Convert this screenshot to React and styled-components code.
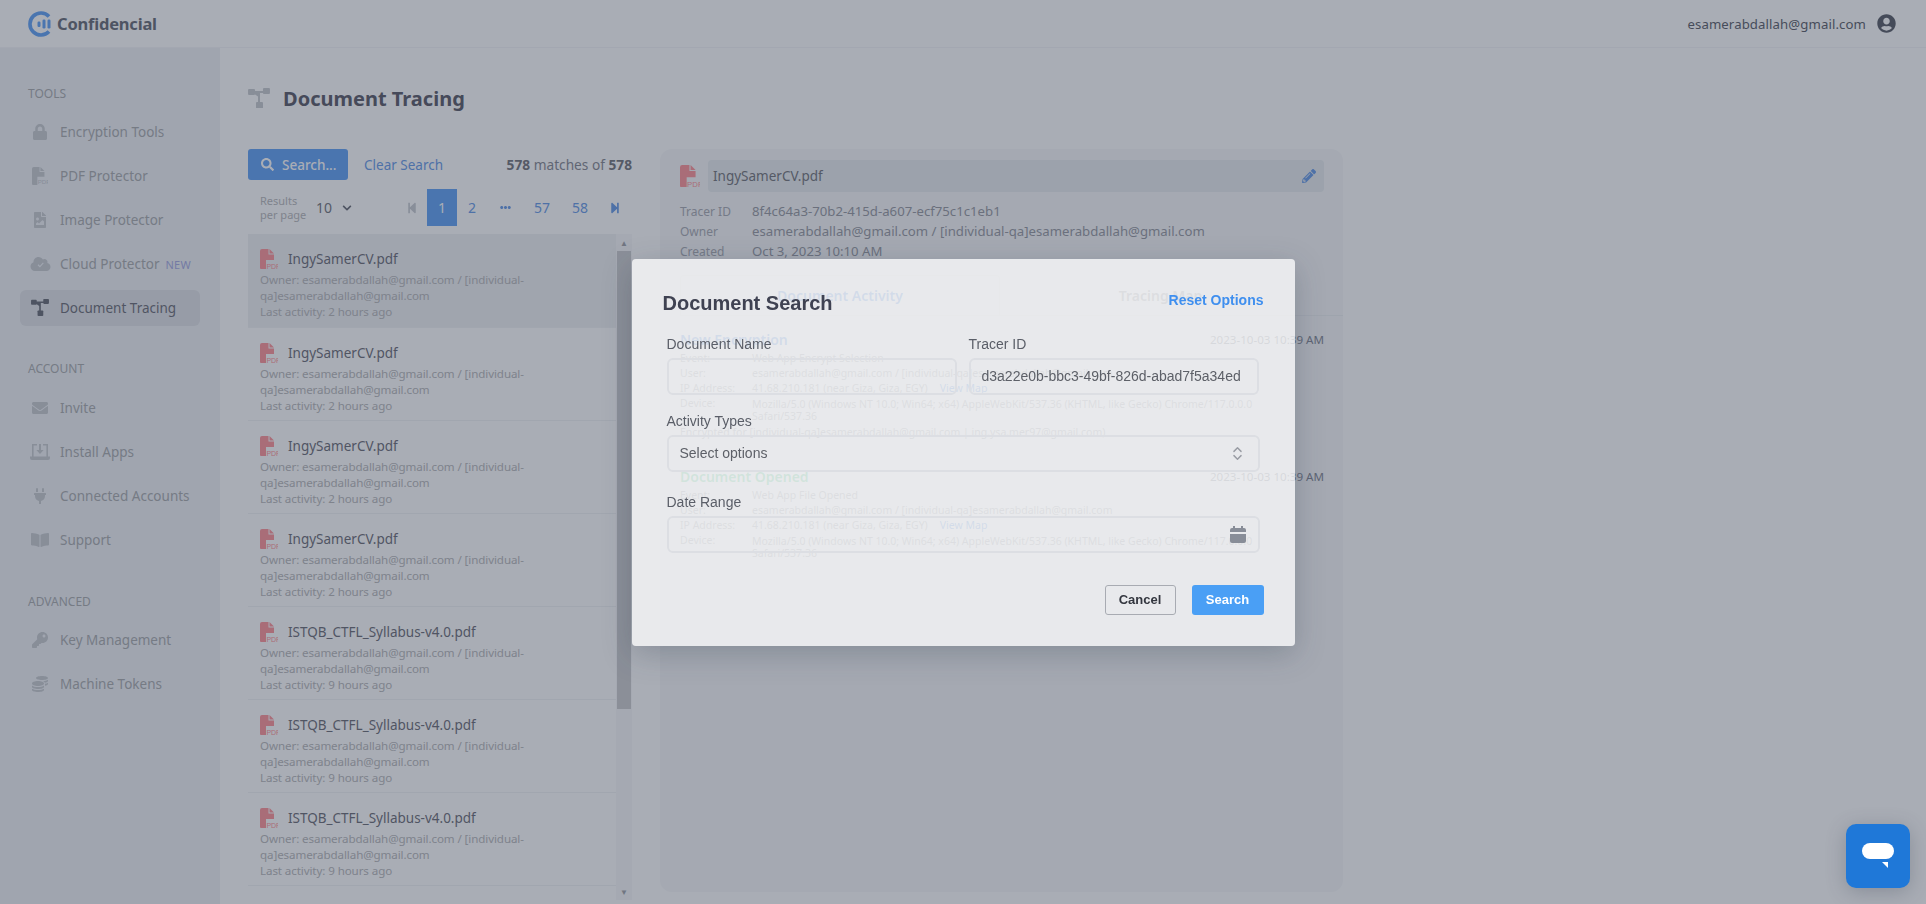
import React from "react";
import styled, { createGlobalStyle } from "styled-components";
import {
  FaLock, FaFileImage, FaEnvelope, FaPlug, FaBookOpen, FaKey, FaCoins,
  FaSearch, FaPencilAlt, FaStepBackward, FaStepForward, FaEllipsisH, FaChevronDown, FaUserCircle,
} from "react-icons/fa";
import { ChevronsUpDown } from "lucide-react";

const Global = createGlobalStyle`
  html, body { margin: 0; padding: 0; height: 100%; overflow: hidden; background: #fff; }
  body { font-family: "Noto Sans", "Open Sans", sans-serif; }
  * { box-sizing: border-box; }
`;

const Page = styled.div`display: flex; flex-direction: column; height: 904px; overflow: hidden;`;
const Header = styled.header`
  height: 48px; flex: none; display: flex; align-items: center; justify-content: space-between;
  padding: 0 30px 0 28px; background: #fff; border-bottom: 1px solid #f4f5f7;
`;
const Logo = styled.div`display: flex; align-items: center; gap: 4px;`;
const LogoText = styled.span`font-size: 16.5px; font-weight: 700; color: #5a5e6b; letter-spacing: -0.2px;`;
const UserBox = styled.div`display: flex; align-items: center; gap: 11px; font-size: 13.2px; color: #4c4f5a; letter-spacing: 0.1px;`;
const UserIcon = styled(FaUserCircle)`font-size: 19px; color: #4a4d58;`;
const Body = styled.div`flex: 1; display: flex; min-height: 0;`;
const Sidebar = styled.nav`width: 220px; flex: none; background: #eef1f5; padding: 38px 20px 0;`;
const SectionLabel = styled.div`
  font-size: 12px; line-height: 16px; color: #a2a4a7; padding-left: 8px;
  margin-top: ${(p) => p.$mt}px; margin-bottom: ${(p) => p.$mb || 12}px;
`;
const NavItem = styled.div`
  height: 36px; margin-bottom: 8px; display: flex; align-items: center; border-radius: 6px;
  font-size: 13.5px; color: ${(p) => (p.$active ? "#5e606b" : "#a2a4a7")};
  background: ${(p) => (p.$active ? "#dee0e5" : "transparent")};
`;
const NavIcon = styled.span`
  width: 40px; flex: none; display: flex; justify-content: center; font-size: 16px;
  color: ${(p) => (p.$active ? "#5a5d68" : "#c3c6cb")};
`;
const NewTag = styled.span`font-size: 11px; color: #9ea3e0; margin-left: 6px; letter-spacing: .2px;`;
const Main = styled.main`flex: 1; min-width: 0; padding: 33px 28px 0; display: flex; flex-direction: column;`;
const TitleRow = styled.div`display: flex; align-items: center; gap: 13px; height: 34px; margin-bottom: 34px;`;
const Title = styled.h1`margin: 0; font-size: 20px; font-weight: 700; color: #4c4b59;`;
const Columns = styled.div`flex: 1; display: flex; gap: 28px; min-height: 0;`;
const Left = styled.div`width: 384px; flex: none; display: flex; flex-direction: column;`;
const Toolbar = styled.div`display: flex; align-items: center; height: 31px; font-size: 13.5px;`;
const SearchBtn = styled.div`
  width: 100px; height: 31px; background: #5299f5; border-radius: 3px; color: #fff; display: flex; align-items: center;
  gap: 8px; padding-left: 13px; font-weight: 500; font-size: 13.5px; margin-right: 16px;
`;
const LinkText = styled.span`color: #5a92e6;`;
const Matches = styled.div`margin-left: auto; color: #7b7d88; font-size: 13.7px; b { color: #66686f; font-weight: 700; }`;
const PagerRow = styled.div`display: flex; align-items: center; height: 37px; margin-top: 9px; margin-bottom: 8px;`;
const PerPage = styled.div`width: 52px; margin-left: 12px; font-size: 11px; line-height: 14px; color: #b2b2b4;`;
const PerSelect = styled.div`
  width: 45px; height: 24px; display: flex; align-items: center; justify-content: space-between; padding: 0 5px 0 4px;
  font-size: 14px; color: #66686f; border-radius: 5px; box-shadow: 0 0 2px #ffffff80;
`;
const Pager = styled.div`margin-left: auto; margin-right: 1px; display: flex; align-items: center; font-size: 14px; color: #5a92e6;`;
const PageCell = styled.span`
  width: ${(p) => p.$w || 30}px; height: 37px; display: flex; align-items: center; justify-content: center;
  color: ${(p) => (p.$current ? "#fff" : p.$dim ? "#c4c7cd" : "#5a92e6")};
  background: ${(p) => (p.$current ? "#5299f5" : "transparent")};
`;
const ListWrap = styled.div`flex: none; display: flex; overflow: hidden; height: 666px;`;
const List = styled.div`flex: 1; min-width: 0; overflow: hidden;`;
const Item = styled.div`
  height: 93px; padding: 16px 12px 0; background: ${(p) => (p.$active ? "#eef0f3" : "transparent")};
  border-bottom: 1px solid #f1f2f4; &:first-child { height: 94px; }
`;
const ItemHead = styled.div`display: flex; align-items: center; gap: 10px; height: 18px; font-size: 13.5px; color: #5e606b; margin-bottom: 4px;`;
const ItemMeta = styled.div`font-size: 11.6px; letter-spacing: -0.1px; line-height: 16px; color: #b2b2b4; padding-right: 76px;`;
const ScrollTrack = styled.div`width: 16px; flex: none; background: #f7f8f9; display: flex; flex-direction: column; align-items: center;`;
const ScrollBtn = styled.div`height: 17px; flex: none; display: flex; align-items: center; justify-content: center; font-size: 8px; color: #9a9ca2;`;
const ScrollThumb = styled.div`width: 14px; height: 458px; flex: none; background: #c8c9cb;`;
const ScrollSpace = styled.div`flex: 1;`;
const Card = styled.section`
  width: 683px; flex: none; height: 743px; border-radius: 12px; background: #f7f8f9; padding: 11px 19px 0 20px; overflow: hidden;
`;
const FileRow = styled.div`display: flex; align-items: center; gap: 8px; height: 32px; margin-bottom: 9px;`;
const NameField = styled.div`
  flex: 1; height: 32px; background: #e7ebee; border-radius: 4px; display: flex; align-items: center; justify-content: space-between;
  padding: 0 8px 0 5px; font-size: 13.5px; color: #66686f;
`;
const Pencil = styled(FaPencilAlt)`font-size: 14px; color: #5a92e6;`;
const InfoRow = styled.div`display: flex; height: 20px; align-items: center; font-size: 13.2px; color: #8e909a;`;
const InfoLabel = styled.span`width: 72px; flex: none; font-size: 12px; color: #a0a2ab;`;
const Tabs = styled.div`display: flex; margin: 14px -19px 0 0; height: 41px; border-bottom: 1px solid #eceef1;`;
const Tab = styled.div`
  width: ${(p) => (p.$active ? "320px" : "auto")}; flex: ${(p) => (p.$active ? "none" : "1")};
  display: flex; align-items: center; justify-content: center; font-size: 14px; font-weight: 600;
  padding-right: ${(p) => (p.$active ? 0 : 22)}px;
  color: ${(p) => (p.$active ? "#5a92e6" : "#9ea1aa")};
  border: ${(p) => (p.$active ? "1px solid #eceef1" : "none")}; border-bottom: none; border-radius: 4px 4px 0 0;
`;
const Event = styled.div`margin-top: ${(p) => p.$mt}px;`;
const EventHead = styled.div`display: flex; justify-content: space-between; align-items: center; height: 20px; margin-bottom: 2px;`;
const EventName = styled.span`font-size: 14px; font-weight: 600; color: ${(p) => p.$color};`;
const EventDate = styled.span`font-size: 11.6px; color: #787b8a;`;
const EventRow = styled.div`display: flex; font-size: 10.5px; line-height: 15px; color: #a0a2ab;`;
const EventLabel = styled.span`width: 72px; flex: none;`;
const MapLink = styled.span`color: #5a92e6; margin-left: 12px;`;
const DeviceText = styled.span`max-width: 530px; line-height: 12px; padding-top: 2px; padding-bottom: 3px;`;

const Overlay = styled.div`
  position: fixed; inset: 0; background: rgba(64, 74, 92, .45); display: flex; align-items: center; justify-content: center;
  font-family: "Liberation Sans", Arial, sans-serif;
`;
const Modal = styled.div`
  width: 663px; height: 387px; background: rgba(255, 255, 255, .75); border-radius: 4px; padding: 32px 31px 0 31px;
  box-shadow: 0 8px 30px rgba(40, 50, 70, .25);
`;
const ModalHead = styled.div`display: flex; justify-content: space-between; align-items: flex-start; height: 24px;`;
const ModalTitle = styled.h2`margin: 0; font-size: 20px; line-height: 24px; font-weight: 700; color: #3f4252;`;
const ResetLink = styled.span`font-size: 14px; line-height: 18px; font-weight: 700; color: #3f8fef;`;
const Form = styled.div`padding: 21px 4px 0;`;
const FieldGrid = styled.div`display: grid; grid-template-columns: 290px 290px; column-gap: 12px;`;
const Field = styled.div`margin-top: ${(p) => p.$mt || 0}px;`;
const Label = styled.label`display: block; font-size: 14px; line-height: 16px; color: #5a5e68; margin-bottom: 6px;`;
const InputBox = styled.div`
  height: 37px; border: 2px solid #dcdee3; border-radius: 6px; display: flex; align-items: center; justify-content: space-between;
  padding: 0 12px 0 11px; font-size: 14px; color: #5d6068;
`;
const Actions = styled.div`display: flex; justify-content: flex-end; gap: 16px; margin-top: 32px; margin-right: -4px;`;
const Btn = styled.div`
  height: 30px; width: ${(p) => p.$w}px; border-radius: 3px; display: flex; align-items: center; justify-content: center;
  font-size: 13px; font-weight: 700;
  background: ${(p) => (p.$primary ? "#4a9ff5" : "transparent")};
  color: ${(p) => (p.$primary ? "#fff" : "#33363f")};
  border: ${(p) => (p.$primary ? "none" : "1.5px solid #a8abb2")};
`;
const Chat = styled.div`
  position: fixed; right: 16px; bottom: 16px; width: 64px; height: 64px; border-radius: 10px; background: #1f78d8;
  box-shadow: 0 4px 20px rgba(60, 70, 85, .3); display: flex; align-items: center; justify-content: center;
`;

const PdfIcon = ({ size = 18, color = "#ff8a90" }) => (
  <svg width={size} height={size * 1.14} viewBox="0 0 18 20.5" style={{ flex: "none" }}>
    <path d="M0 2a2 2 0 0 1 2-2h6.5v5.5H14V11H6v9.5H2a2 2 0 0 1-2-2z" fill={color} />
    <path d="M9.5 0 14 4.5H9.5z" fill={color} />
    <text x="6.4" y="19.5" fontSize="7" fontFamily="Liberation Sans" fill={color}>PDF</text>
  </svg>
);
const TraceIcon = ({ size = 18, color }) => (
  <svg width={size} height={size * 0.95} viewBox="0 0 22 21" fill={color}>
    <rect x="0" y="1" width="7" height="6" rx="1" />
    <rect x="15" y="0" width="7" height="6" rx="1" />
    <rect x="8" y="14" width="7" height="7" rx="1" />
    <path d="M6 3h10v2H12v10h-2V8.5L5 5z" />
  </svg>
);
const InstallIcon = () => (
  <svg width="20" height="16" viewBox="0 0 20 16" fill="#c3c6cb">
    <path d="M2 0h5v1.6H3.6v10.8h12.8V1.6H13V0h5v12.4h2V14a2 2 0 0 1-2 2H2a2 2 0 0 1-2-2v-1.6h2z" />
    <path d="M9 0h2v6h2.6L10 10 6.4 6H9z" />
  </svg>
);
const CloudCheck = () => (
  <svg width="21" height="16" viewBox="0 0 640 512">
    <path fill="#c3c6cb" d="M537.6 226.6c4.1-10.7 6.4-22.4 6.4-34.6 0-53-43-96-96-96-19.7 0-38.1 6-53.3 16.2C367 64.2 315.3 32 256 32c-88.4 0-160 71.6-160 160 0 2.7.1 5.4.2 8.1C40.2 219.8 0 273.2 0 336c0 79.5 64.5 144 144 144h368c70.7 0 128-57.3 128-128 0-61.9-44-113.6-102.4-125.4z" />
    <path d="M240 280l60 60 110-120" fill="none" stroke="#eef1f5" strokeWidth="36" />
  </svg>
);
const CalIcon = () => (
  <svg width="16" height="17" viewBox="0 0 16 17">
    <path d="M3 0h2v2h6V0h2v2h1a2 2 0 0 1 2 2v2H0V4a2 2 0 0 1 2-2h1z" fill="#888d98" />
    <path d="M0 8h16v7a2 2 0 0 1-2 2H2a2 2 0 0 1-2-2z" fill="#888d98" />
  </svg>
);
const LogoMark = () => (
  <svg width="25" height="26" viewBox="0 0 25 26">
    <path d="M21 5.5A11 11 0 1 0 21 20.5" fill="none" stroke="#5299f5" strokeWidth="3.6" />
    <rect x="9.5" y="10.5" width="3" height="5.5" rx="1.2" fill="#5299f5" />
    <rect x="14.5" y="8.5" width="3" height="9" rx="1.2" fill="#5299f5" />
    <rect x="19.5" y="8.5" width="3" height="9" rx="1.2" fill="#5299f5" />
  </svg>
);

const tools = [
  { t: "Encryption Tools", i: <FaLock /> },
  { t: "PDF Protector", i: <PdfIcon size={16} color="#c3c6cb" /> },
  { t: "Image Protector", i: <FaFileImage /> },
  { t: "Cloud Protector", i: <CloudCheck />, tag: "NEW" },
  { t: "Document Tracing", i: <TraceIcon color="#5a5d68" />, active: true },
];
const account = [
  { t: "Invite", i: <FaEnvelope /> },
  { t: "Install Apps", i: <InstallIcon /> },
  { t: "Connected Accounts", i: <FaPlug /> },
  { t: "Support", i: <FaBookOpen style={{ fontSize: 18 }} /> },
];
const advanced = [
  { t: "Key Management", i: <FaKey /> },
  { t: "Machine Tokens", i: <FaCoins /> },
];
const docs = [
  ["IngySamerCV.pdf", "2 hours ago"], ["IngySamerCV.pdf", "2 hours ago"], ["IngySamerCV.pdf", "2 hours ago"], ["IngySamerCV.pdf", "2 hours ago"],
  ["ISTQB_CTFL_Syllabus-v4.0.pdf", "9 hours ago"], ["ISTQB_CTFL_Syllabus-v4.0.pdf", "9 hours ago"], ["ISTQB_CTFL_Syllabus-v4.0.pdf", "9 hours ago"], ["ISTQB_CTFL_Syllabus-v4.0.pdf", "9 hours ago"],
];
const UA = "Mozilla/5.0 (Windows NT 10.0; Win64; x64) AppleWebKit/537.36 (KHTML, like Gecko) Chrome/117.0.0.0 Safari/537.36";

const Nav = ({ items }) => items.map((n) => (
  <NavItem key={n.t} $active={n.active}>
    <NavIcon $active={n.active}>{n.i}</NavIcon>
    {n.t}
    {n.tag && <NewTag>{n.tag}</NewTag>}
  </NavItem>
));

const EventBlock = ({ mt, name, color, event, encrypted }) => (
  <Event $mt={mt}>
    <EventHead><EventName $color={color}>{name}</EventName><EventDate>2023-10-03 10:39 AM</EventDate></EventHead>
    <EventRow><EventLabel>Event:</EventLabel>{event}</EventRow>
    <EventRow><EventLabel>User:</EventLabel>esamerabdallah@gmail.com / [individual-qa]esamerabdallah@gmail.com</EventRow>
    <EventRow><EventLabel>IP Address:</EventLabel>41.68.210.181 (near Giza, Giza, EGY)<MapLink>View Map</MapLink></EventRow>
    <EventRow><EventLabel>Device:</EventLabel><DeviceText>{UA}</DeviceText></EventRow>
    {encrypted && <EventRow>{encrypted}</EventRow>}
  </Event>
);

export default function App() {
  return (
    <>
      <Global />
      <Page>
        <Header>
          <Logo><LogoMark /><LogoText>Confidencial</LogoText></Logo>
          <UserBox>esamerabdallah@gmail.com<UserIcon /></UserBox>
        </Header>
        <Body>
          <Sidebar>
            <SectionLabel $mt={0}>TOOLS</SectionLabel>
            <Nav items={tools} />
            <SectionLabel $mt={35} $mb={13}>ACCOUNT</SectionLabel>
            <Nav items={account} />
            <SectionLabel $mt={36}>ADVANCED</SectionLabel>
            <Nav items={advanced} />
          </Sidebar>
          <Main>
            <TitleRow><TraceIcon size={22} color="#c3c6cb" /><Title>Document Tracing</Title></TitleRow>
            <Columns>
              <Left>
                <Toolbar>
                  <SearchBtn><FaSearch size={13} />Search...</SearchBtn>
                  <LinkText>Clear Search</LinkText>
                  <Matches><b>578</b> matches of <b>578</b></Matches>
                </Toolbar>
                <PagerRow>
                  <PerPage>Results per page</PerPage>
                  <PerSelect>10<FaChevronDown size={10} color="#5a5d68" /></PerSelect>
                  <Pager>
                    <PageCell $dim><FaStepBackward size={12} /></PageCell>
                    <PageCell $current>1</PageCell>
                    <PageCell>2</PageCell>
                    <PageCell $w={36}><FaEllipsisH size={11} /></PageCell>
                    <PageCell $w={38}>57</PageCell>
                    <PageCell $w={38}>58</PageCell>
                    <PageCell $w={32}><FaStepForward size={12} /></PageCell>
                  </Pager>
                </PagerRow>
                <ListWrap>
                  <List>
                    {docs.map(([name, ago], i) => (
                      <Item key={i} $active={i === 0}>
                        <ItemHead><PdfIcon size={18} />{name}</ItemHead>
                        <ItemMeta>Owner: esamerabdallah@gmail.com / [individual-qa]esamerabdallah@gmail.com<br />Last activity: {ago}</ItemMeta>
                      </Item>
                    ))}
                  </List>
                  <ScrollTrack>
                    <ScrollBtn>▲</ScrollBtn>
                    <ScrollThumb />
                    <ScrollSpace />
                    <ScrollBtn>▼</ScrollBtn>
                  </ScrollTrack>
                </ListWrap>
              </Left>
              <Card>
                <FileRow>
                  <PdfIcon size={20} />
                  <NameField>IngySamerCV.pdf<Pencil /></NameField>
                </FileRow>
                <InfoRow><InfoLabel>Tracer ID</InfoLabel>8f4c64a3-70b2-415d-a607-ecf75c1c1eb1</InfoRow>
                <InfoRow><InfoLabel>Owner</InfoLabel>esamerabdallah@gmail.com / [individual-qa]esamerabdallah@gmail.com</InfoRow>
                <InfoRow><InfoLabel>Created</InfoLabel>Oct 3, 2023 10:10 AM</InfoRow>
                <Tabs>
                  <Tab $active>Document Activity</Tab>
                  <Tab>Tracing Map</Tab>
                </Tabs>
                <EventBlock mt={13} name="New Encryption" color="#5a92e6" event="Web App Encrypt Selection"
                  encrypted="Encrypted for [individual-qa]esamerabdallah@gmail.com | ing.ysa.mer97@gmail.com)" />
                <EventBlock mt={26} name="Document Opened" color="#4fc98a" event="Web App File Opened" />
              </Card>
            </Columns>
          </Main>
        </Body>
      </Page>
      <Overlay>
        <Modal>
          <ModalHead>
            <ModalTitle>Document Search</ModalTitle>
            <ResetLink>Reset Options</ResetLink>
          </ModalHead>
          <Form>
            <FieldGrid>
              <Field><Label>Document Name</Label><InputBox /></Field>
              <Field><Label>Tracer ID</Label><InputBox>d3a22e0b-bbc3-49bf-826d-abad7f5a34ed</InputBox></Field>
            </FieldGrid>
            <Field $mt={18}>
              <Label>Activity Types</Label>
              <InputBox>Select options<ChevronsUpDown size={17} color="#9a9da5" /></InputBox>
            </Field>
            <Field $mt={22}>
              <Label>Date Range</Label>
              <InputBox><span /><CalIcon /></InputBox>
            </Field>
            <Actions>
              <Btn $w={71}>Cancel</Btn>
              <Btn $w={72} $primary>Search</Btn>
            </Actions>
          </Form>
        </Modal>
      </Overlay>
      <Chat>
        <svg width="36" height="30" viewBox="0 0 36 30">
          <rect x="2" y="2" width="32" height="16" rx="8" fill="#fff" />
          <path d="M22 21h6v6z" fill="#fff" />
        </svg>
      </Chat>
    </>
  );
}
